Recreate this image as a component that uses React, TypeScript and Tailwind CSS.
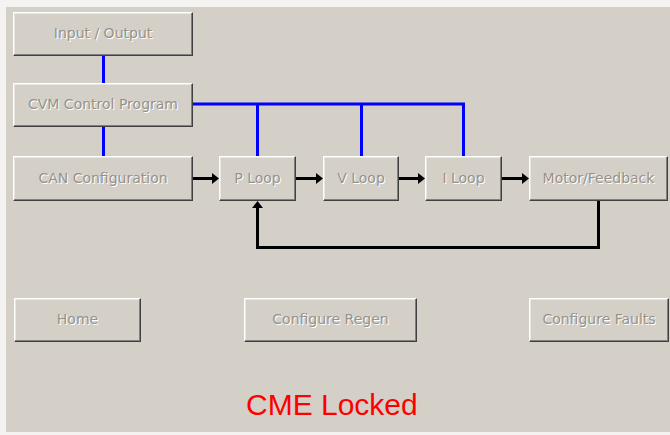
const btn =
  'flex items-center justify-center shrink-0 pb-[1px] bg-[#d4d0c8] border border-t-white border-l-white border-b-[#404040] border-r-[#404040] shadow-[inset_-1px_-1px_0_#808080,inset_1px_1px_0_#e8e6e2] text-[14px] text-[#96928b] [text-shadow:1px_1px_0_#ffffff] [font-family:"DejaVu_Sans",Verdana,sans-serif]';

function Wires() {
  return (
    <svg className="absolute inset-0 pointer-events-none" width={670} height={435} viewBox="0 0 670 435">
      <g stroke="#0000ff" strokeWidth={3} fill="none">
        <line x1={103.5} y1={55} x2={103.5} y2={84} />
        <line x1={103.5} y1={126} x2={103.5} y2={157} />
        <polyline points="192,104 463.5,104 463.5,157" />
        <line x1={257.5} y1={104} x2={257.5} y2={157} />
        <line x1={361.5} y1={104} x2={361.5} y2={157} />
      </g>
      <g stroke="#000000" strokeWidth={3} fill="none">
        <line x1={192} y1={178.5} x2={213} y2={178.5} />
        <line x1={295} y1={178.5} x2={317} y2={178.5} />
        <line x1={398} y1={178.5} x2={419} y2={178.5} />
        <line x1={501} y1={178.5} x2={523} y2={178.5} />
        <polyline points="598.5,200 598.5,247.5 257.5,247.5 257.5,207" />
      </g>
      <g fill="#000000">
        <polygon points="212,173 219,178.5 212,184" />
        <polygon points="316,173 323,178.5 316,184" />
        <polygon points="418,173 425,178.5 418,184" />
        <polygon points="522,173 529,178.5 522,184" />
        <polygon points="252,208 257.5,201 263,208" />
      </g>
    </svg>
  );
}

export default function App() {
  return (
    <div className="relative w-[670px] h-[435px] bg-[#f4f3f1] overflow-hidden">
      <div className="ml-[6px] mt-[7px] h-[425px] bg-[#d4d0c8] pl-[7px] pt-[5px] flex flex-col">
        <Wires />
        <div className={`${btn} relative w-[180px] h-[44px]`}>Input / Output</div>
        <div className={`${btn} relative w-[180px] h-[44px] mt-[27px]`}>CVM Control Program</div>
        <div className="relative flex mt-[29px] h-[45px]">
          <div className={`${btn} w-[180px]`}>CAN Configuration</div>
          <div className={`${btn} w-[77px] ml-[26px]`}>P Loop</div>
          <div className={`${btn} w-[76px] ml-[27px]`}>V Loop</div>
          <div className={`${btn} w-[77px] ml-[26px]`}>I Loop</div>
          <div className={`${btn} w-[139px] ml-[27px]`}>Motor/Feedback</div>
        </div>
        <div className="relative flex mt-[97px] h-[44px] ml-[1px]">
          <div className={`${btn} w-[127px]`}>Home</div>
          <div className={`${btn} w-[173px] ml-[103px]`}>Configure Regen</div>
          <div className={`${btn} w-[140px] ml-[112px]`}>Configure Faults</div>
        </div>
        <div className="relative mt-[48px] ml-[233px] text-[30px] leading-none text-[#ff0000] [font-family:'Liberation_Sans',Arial,sans-serif]">
          CME Locked
        </div>
      </div>
    </div>
  );
}
